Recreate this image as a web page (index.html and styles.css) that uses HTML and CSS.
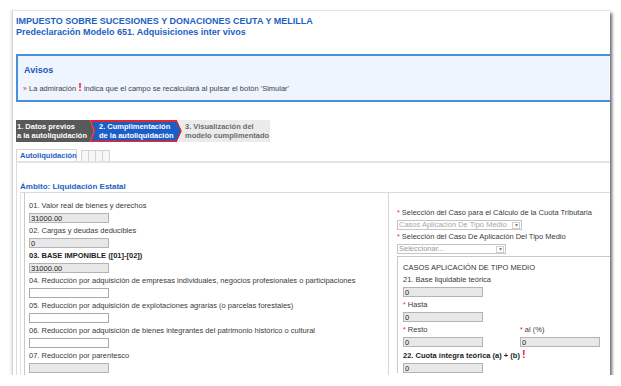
FILE: index.html
```html
<!DOCTYPE html>
<html lang="es">
<head>
    <meta charset="UTF-8">
    <title>Predeclaración Modelo 651</title>
    <link rel="stylesheet" href="styles.css">
</head>
<body>
    <div class="page">
        <header class="page-head">
            <h1>IMPUESTO SOBRE SUCESIONES Y DONACIONES CEUTA Y MELILLA</h1>
            <h2>Predeclaración Modelo 651. Adquisiciones inter vivos</h2>
        </header>

        <div class="avisos">
            <h3>Avisos</h3>
            <p><span class="bullet">»</span> La admiración <span class="bang">!</span> indica que el campo se recalculará al pulsar el botón 'Simular'</p>
        </div>

        <ol class="steps">
            <li class="step step-done">1. Datos previos<br>a la autoliquidación</li>
            <li class="step step-current"><span>2. Cumplimentación<br>de la autoliquidación</span></li>
            <li class="step step-next">3. Visualización del<br>modelo cumplimentado</li>
        </ol>

        <div class="tabs">
            <span class="tab active">Autoliquidación</span>
            <span class="tab empty"></span>
            <span class="tab empty"></span>
            <span class="tab empty"></span>
            <span class="tab empty"></span>
        </div>

        <div class="tab-body">
            <div class="ambito-title">Ámbito: Liquidación Estatal</div>
            <div class="ambito">
                <div class="col-left">
                    <div class="field">
                        <label>01. Valor real de bienes y derechos</label>
                        <input type="text" value="31000.00" readonly>
                    </div>
                    <div class="field">
                        <label>02. Cargas y deudas deducibles</label>
                        <input type="text" value="0" readonly>
                    </div>
                    <div class="field">
                        <label class="strong">03. BASE IMPONIBLE ([01]-[02])</label>
                        <input type="text" value="31000.00" readonly>
                    </div>
                    <div class="field">
                        <label>04. Reducción por adquisición de empresas individuales, negocios profesionales o participaciones</label>
                        <input type="text" class="editable">
                    </div>
                    <div class="field">
                        <label>05. Reducción por adquisición de explotaciones agrarias (o parcelas forestales)</label>
                        <input type="text" class="editable">
                    </div>
                    <div class="field">
                        <label>06. Reducción por adquisición de bienes integrantes del patrimonio histórico o cultural</label>
                        <input type="text" class="editable">
                    </div>
                    <div class="field">
                        <label>07. Reducción por parentesco</label>
                        <input type="text" readonly>
                    </div>
                </div>

                <div class="col-right">
                    <label><span class="req">*</span> Selección del Caso para el Cálculo de la Cuota Tributaria</label>
                    <div class="select disabled"><span>Casos Aplicación De Tipo Medio</span><span class="arrow">▾</span></div>
                    <label class="second"><span class="req">*</span> Selección del Caso De Aplicación Del Tipo Medio</label>
                    <div class="select narrow"><span>Seleccionar...</span><span class="arrow">▾</span></div>

                    <div class="casos">
                        <div class="casos-title">CASOS APLICACIÓN DE TIPO MEDIO</div>
                        <div class="field">
                            <label>21. Base liquidable teórica</label>
                            <input type="text" value="0" readonly>
                        </div>
                        <div class="field">
                            <label><span class="req">*</span> Hasta</label>
                            <input type="text" value="0" readonly>
                        </div>
                        <div class="field-row">
                            <div class="field">
                                <label><span class="req">*</span> Resto</label>
                                <input type="text" value="0" readonly>
                            </div>
                            <div class="field">
                                <label><span class="req">*</span> al (%)</label>
                                <input type="text" value="0" readonly>
                            </div>
                        </div>
                        <div class="field">
                            <label class="strong">22. Cuota íntegra teórica (a) + (b) <span class="bang">!</span></label>
                            <input type="text" value="0" readonly>
                        </div>
                    </div>
                </div>
            </div>
        </div>
    </div>
</body>
</html>
```

FILE: styles.css
```css
body { margin: 0; background: #fff; font-family: "Liberation Sans", Arial, sans-serif; padding: 10px 0 0 12px; color: #333; }
.page { width: 598px; height: 365px; box-sizing: border-box; background: #fff; border-left: 1px solid #d6d6d6; border-top: 1px solid #e4e4e4; box-shadow: 2px 3px 3px rgba(0,0,0,0.6), -2px 0 2px rgba(0,0,0,0.06); overflow: hidden; }

.page-head { padding: 5px 0 0 3px; }
.page-head h1, .page-head h2 { margin: 0; font-size: 9px; line-height: 11px; font-weight: bold; color: #1d5fc2; }

.avisos { margin: 16px -6px 0 3px; border: 2px solid #4b8fdc; background: #eef5fe; padding: 8px 6px 5px 6px; }
.avisos h3 { margin: 0; font-size: 9px; line-height: 12px; color: #1a56c0; }
.avisos p { margin: 6px 0 0 -1px; font-size: 7.5px; line-height: 12px; color: #444; }
.bullet { color: #d4353a; font-size: 7px; }
.bang { color: #e8262b; font-weight: bold; font-size: 11px; line-height: 10px; }

.steps { list-style: none; margin: 18px 0 0 3px; padding: 0; display: flex; }
.step { height: 22px; box-sizing: border-box; display: flex; align-items: center; font-size: 7.5px; line-height: 9px; font-weight: bold; }
.step-done { width: 78px; padding-left: 1px; background: #595959; color: #fff; clip-path: polygon(0 0, 74px 0, 78px 50%, 74px 100%, 0 100%); }
.step-current { width: 92px; margin-left: -4px; padding: 1.5px; background: #e3262b; clip-path: polygon(0 0, 87px 0, 92px 50%, 87px 100%, 0 100%, 4px 50%); }
.step-current span { display: flex; align-items: center; width: 100%; height: 100%; box-sizing: border-box; padding-left: 7.5px; background: #1b5ec7; color: #fff; clip-path: polygon(0.5px 0, 84.7px 0, 89px 50%, 84.7px 100%, 0.5px 100%, 4px 50%); }
.step-next { width: 93px; margin-left: -5px; padding-left: 8px; background: #ebebeb; color: #6b6b6b; clip-path: polygon(0 0, 100% 0, 100% 100%, 0 100%, 5px 50%); }

.tabs { display: flex; align-items: flex-end; margin: 7px 0 0 3px; height: 12px; }
.tab { box-sizing: border-box; border: 1px solid #d4d4d4; border-bottom: none; }
.tab.active { width: 61px; height: 12px; padding-left: 3px; font-size: 7.5px; line-height: 11px; font-weight: bold; color: #1d5fc2; background: #fff; }
.tab.empty { width: 8px; height: 11px; background: #f7f7f7; margin-left: -1px; }
.tab.active + .tab.empty { margin-left: 4px; }

.tab-body { margin-left: 3px; border-top: 2px solid #e3e3e3; border-left: 1px solid #dcdcdc; padding-left: 3px; height: 220px; }
.ambito-title { padding-top: 18px; font-size: 8px; line-height: 11px; font-weight: bold; color: #1d5fc2; }
.ambito { display: flex; border-top: 1px solid #dadada; border-left: 1px solid #e4e4e4; padding-left: 3px; height: 200px; }

.col-left { width: 364px; box-sizing: border-box; border-left: 1px solid #c9c9c9; padding: 7px 0 0 4px; }
.col-right { flex: 1; border-left: 1px solid #d6d6d6; padding: 14px 0 0 8px; }

label { display: block; font-size: 7.5px; line-height: 11px; color: #3a3a3a; white-space: nowrap; }
label.strong { font-weight: bold; color: #222; }
label.second { margin-top: 1px; }
.req { color: #e3262b; font-size: 7px; }

input { display: block; width: 80px; height: 10px; box-sizing: border-box; margin: 2px 0; padding: 0 1px; border: 1px solid #b3b3b3; background: #e8e8e8; font-family: "Liberation Sans", Arial, sans-serif; font-size: 7.5px; line-height: 8px; color: #222; outline: none; }
input.editable { background: #fff; border-color: #a9a9a9; }

.select { display: flex; align-items: center; justify-content: space-between; width: 125px; height: 10px; box-sizing: border-box; margin-top: 2px; border: 1px solid #c4c4c4; background: #fff; font-size: 7.5px; line-height: 8px; color: #9a9a9a; padding: 0 1px; }
.select.narrow { width: 109px; }
.select.disabled { color: #a8a8a8; }
.select .arrow { width: 8px; height: 7px; box-sizing: border-box; border: 1px solid #cfcfcf; font-size: 6px; line-height: 5px; text-align: center; color: #888; }

.casos { margin-top: 2px; border-top: 1px solid #c8c8c8; border-left: 1px solid #c8c8c8; padding: 5px 0 0 5px; }
.casos-title { font-size: 7.5px; line-height: 11px; color: #333; margin-bottom: 1px; }
.field-row { display: grid; grid-template-columns: 117px 80px; }
```
